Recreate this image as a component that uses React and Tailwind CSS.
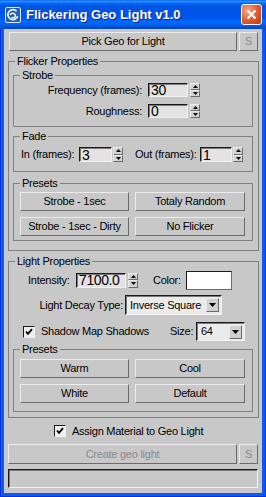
import React from 'react';

const FONT = "font-['Liberation_Sans',Arial,sans-serif]";
const RAISED = 'border border-t-[#ececec] border-l-[#ececec] border-r-[#6b6b6b] border-b-[#6b6b6b]';
const SUNKEN = 'border border-t-[#1a1a1a] border-l-[#1a1a1a] border-r-[#f2f2f2] border-b-[#f2f2f2]';

const Btn = ({ className = '', dim = false, children }) => (
  <button className={`flex items-center justify-center bg-[#c8c8c8] ${RAISED} ${dim ? 'text-[#8a8a8a]' : 'text-black'} ${className}`}>
    {children}
  </button>
);

const Group = ({ label, className = '', children }) => (
  <fieldset className={`border border-[#808080] ${className}`}>
    <legend className="ml-[6px] px-[2px] leading-[13px]">{label}</legend>
    {children}
  </fieldset>
);

const Field = ({ value, className = '' }) => (
  <div className={`flex items-center bg-[#e4e2e2] pl-[2px] text-[14px] tracking-[-0.4px] leading-none ${SUNKEN} shadow-[inset_1px_1px_0_#7a7a7a] ${className}`}>
    {value}
  </div>
);

const Spinner = ({ className = '' }) => (
  <div className={`flex flex-col w-[10px] ${className}`}>
    <div className={`flex-1 flex items-center justify-center bg-[#d4d4d4] ${RAISED}`}>
      <svg width="5" height="3" viewBox="0 0 5 3"><path d="M2.5 0L5 3H0Z" fill="#000" /></svg>
    </div>
    <div className={`flex-1 flex items-center justify-center bg-[#d4d4d4] ${RAISED}`}>
      <svg width="5" height="3" viewBox="0 0 5 3"><path d="M0 0H5L2.5 3Z" fill="#000" /></svg>
    </div>
  </div>
);

const Select = ({ value, className = '' }) => (
  <div className={`flex items-center bg-[#ebebeb] pl-[4px] pr-[2px] ${SUNKEN} shadow-[inset_1px_1px_0_#7a7a7a] ${className}`}>
    <span className="flex-1">{value}</span>
    <div className={`w-[13px] h-[14px] flex items-center justify-center bg-[#d0d0d0] ${RAISED}`}>
      <svg width="7" height="4" viewBox="0 0 7 4"><path d="M0 0H7L3.5 4Z" fill="#000" /></svg>
    </div>
  </div>
);

const Check = ({ className = '' }) => (
  <div className={`w-[12px] h-[12px] flex items-center justify-center bg-[#eeeeee] ${SUNKEN} ${className}`}>
    <svg width="8" height="8" viewBox="0 0 8 8">
      <path d="M1 3.5L3 5.8L7 1.2" fill="none" stroke="#000" strokeWidth="1.8" />
    </svg>
  </div>
);

const Logo = () => (
  <svg width="16" height="16" viewBox="0 0 16 16" className="ml-[5px] shrink-0">
    <rect x="0.5" y="0.5" width="15" height="15" rx="1.5" fill="#1f5fb8" stroke="#dfe9ff" />
    <path d="M11.6 4.3A5 5 0 1 0 12.7 9" fill="none" stroke="#fff" strokeWidth="1.6" />
    <path d="M5 8C6 5.6 10 5.6 10.4 8.4C10.7 10.4 8 11.4 6.5 10.4" fill="none" stroke="#fff" strokeWidth="1.4" />
  </svg>
);

export default function App() {
  return (
    <div className={`w-[266px] h-[497px] flex flex-col bg-[#0a5cf0] shadow-[inset_1px_0_#0831d9,inset_-1px_0_#0831d9,inset_0_-1px_#0831d9] ${FONT} text-[11px] leading-[13px] tracking-[-0.25px] text-black`}>
      {/* title bar */}
      <div className="h-[29px] shrink-0 flex items-center bg-[linear-gradient(180deg,#0058ee_0%,#3593ff_4%,#288eff_6%,#127dff_8%,#036ffc_10%,#0262ee_14%,#0057e5_20%,#0054e3_24%,#0055eb_56%,#005bf5_66%,#026afe_76%,#0062ef_86%,#0052d6_92%,#0046c0_100%)]">
        <Logo />
        <span className="ml-[5px] text-white font-bold text-[13px] tracking-normal [text-shadow:1px_1px_#0f2a8a]">
          Flickering Geo Light v1.0
        </span>
        <div className="ml-auto mr-[4px] w-[21px] h-[21px] rounded-[3px] border border-white bg-[radial-gradient(circle_at_30%_30%,#f4a888,#e2582e_55%,#c0380e)] flex items-center justify-center">
          <svg width="11" height="11" viewBox="0 0 11 11">
            <path d="M1.5 1.5L9.5 9.5M9.5 1.5L1.5 9.5" stroke="#fff" strokeWidth="2" />
          </svg>
        </div>
      </div>

      {/* client area */}
      <div className="mx-[4px] h-[464px] bg-[#c8c8c8] flex flex-col">
        <div className="flex mt-[3px] ml-[5px] gap-[2px]">
          <Btn className="w-[228px] h-[19px]">Pick Geo for Light</Btn>
          <Btn dim className="w-[19px] h-[19px]">S</Btn>
        </div>

        <Group label="Flicker Properties" className="mt-[4px] ml-[4px] w-[251px]">
          <Group label="Strobe" className="ml-[4px] mt-[1px] w-[240px]">
            <div className="flex items-center mt-[1px] h-[14px]">
              <span className="w-[128px] text-right">Frequency (frames):</span>
              <Field value="30" className="ml-[6px] w-[40px] h-[14px]" />
              <Spinner className="ml-[2px] h-[14px]" />
            </div>
            <div className="flex items-center mt-[7px] mb-[8px] h-[14px]">
              <span className="w-[128px] text-right">Roughness:</span>
              <Field value="0" className="ml-[6px] w-[40px] h-[14px]" />
              <Spinner className="ml-[2px] h-[14px]" />
            </div>
          </Group>

          <Group label="Fade" className="ml-[4px] mt-[3px] w-[240px]">
            <div className="flex items-center mt-[4px] mb-[9px] h-[15px]">
              <span className="ml-[7px] w-[58px]">In (frames):</span>
              <Field value="3" className="w-[33px] h-[15px]" />
              <Spinner className="ml-[1px] h-[15px]" />
              <span className="ml-[12px] w-[65px]">Out (frames):</span>
              <Field value="1" className="w-[32px] h-[15px]" />
              <Spinner className="ml-[1px] h-[15px]" />
            </div>
          </Group>

          <Group label="Presets" className="ml-[4px] mt-[5px] mb-[9px] w-[240px]">
            <div className="flex mt-[2px] ml-[6px] gap-[6px]">
              <Btn className="w-[109px] h-[19px]">Strobe - 1sec</Btn>
              <Btn className="w-[110px] h-[19px]">Totaly Random</Btn>
            </div>
            <div className="flex mt-[6px] mb-[4px] ml-[6px] gap-[6px]">
              <Btn className="w-[109px] h-[19px]">Strobe - 1sec - Dirty</Btn>
              <Btn className="w-[110px] h-[19px]">No Flicker</Btn>
            </div>
          </Group>
        </Group>

        <Group label="Light Properties" className="mt-[4px] ml-[4px] w-[251px]">
          <div className="flex items-center mt-[2px] h-[20px]">
            <span className="ml-[19px] w-[48px]">Intensity:</span>
            <Field value="7100.0" className="w-[50px] h-[15px]" />
            <Spinner className="ml-[2px] h-[15px]" />
            <span className="ml-[15px] w-[33px]">Color:</span>
            <div className="w-[46px] h-[19px] bg-white border border-t-[#1a1a1a] border-l-[#1a1a1a] border-r-[#6b6b6b] border-b-[#6b6b6b]" />
          </div>
          <div className="flex items-center mt-[5px] h-[20px]">
            <span className="w-[114px] text-right">Light Decay Type:</span>
            <Select value="Inverse Square" className="ml-[2px] w-[97px] h-[20px]" />
          </div>
          <div className="flex items-center mt-[7px] h-[19px]">
            <Check className="ml-[14px]" />
            <span className="ml-[6px] w-[129px]">Shadow Map Shadows</span>
            <span className="w-[26px]">Size:</span>
            <Select value="64" className="w-[49px] h-[19px]" />
          </div>

          <Group label="Presets" className="ml-[4px] mt-[2px] mb-[5px] w-[240px]">
            <div className="flex mt-[3px] ml-[6px] gap-[6px]">
              <Btn className="w-[109px] h-[19px]">Warm</Btn>
              <Btn className="w-[110px] h-[19px]">Cool</Btn>
            </div>
            <div className="flex mt-[6px] mb-[8px] ml-[6px] gap-[6px]">
              <Btn className="w-[109px] h-[19px]">White</Btn>
              <Btn className="w-[110px] h-[19px]">Default</Btn>
            </div>
          </Group>
        </Group>

        <div className="flex items-center mt-[7px] h-[12px]">
          <Check className="ml-[50px]" />
          <span className="ml-[6px]">Assign Material to Geo Light</span>
        </div>

        <div className="flex mt-[7px] ml-[4px] gap-[2px]">
          <Btn dim className="w-[229px] h-[20px]">Create geo light</Btn>
          <Btn dim className="w-[19px] h-[20px]">S</Btn>
        </div>

        <div className="mt-[5px] ml-[4px] w-[250px] h-[19px] border border-t-[#1a1a1a] border-l-[#1a1a1a] border-r-[#f2f2f2] border-b-[#f2f2f2] shadow-[inset_1px_1px_0_#7a7a7a]" />
      </div>
    </div>
  );
}
